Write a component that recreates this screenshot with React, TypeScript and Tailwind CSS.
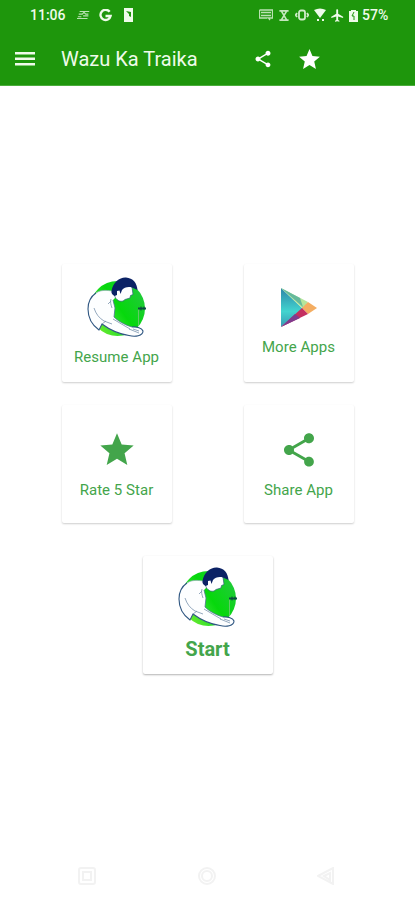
import type { ReactNode } from "react";

const STAR = "M12 17.27 18.18 21l-1.64-7.03L22 9.24l-7.19-.61L12 2 9.19 8.63 2 9.24l5.46 4.73L5.82 21z";
const SHARE =
  "M18 16.08c-.76 0-1.44.3-1.96.77L8.91 12.7c.05-.23.09-.46.09-.7s-.04-.47-.09-.7l7.05-4.11c.54.5 1.25.81 2.04.81 1.66 0 3-1.34 3-3s-1.34-3-3-3-3 1.34-3 3c0 .24.04.47.09.7L8.04 9.81C7.5 9.31 6.79 9 6 9c-1.66 0-3 1.34-3 3s1.34 3 3 3c.79 0 1.5-.31 2.04-.81l7.12 4.16c-.05.21-.08.43-.08.65 0 1.61 1.31 2.92 2.92 2.92s2.92-1.31 2.92-2.92-1.31-2.92-2.92-2.92z";
const PLANE = "M21 16v-2l-8-5V3.500C13 2.670 12.330 2 11.500 2S10 2.670 10 3.500V9l-8 5v2l8-2.500V19l-2 1.500V22l3.500-1 3.500 1v-1.500L13 19v-5.500z";

function Glyph({ d, className }: { d: string; className: string }) {
  return (
    <svg viewBox="0 0 24 24" className={className} fill="currentColor">
      <path d={d} />
    </svg>
  );
}

function Logo() {
  return (
    <svg viewBox="0 0 60 60" className="h-[60px] w-[60px] shrink-0">
      <defs>
        <linearGradient id="disc" x1="0" y1="1" x2="1" y2="0.3">
          <stop offset="0" stopColor="#8cf02c" />
          <stop offset="0.4" stopColor="#2fe02c" />
          <stop offset="0.6" stopColor="#06d80c" />
          <stop offset="1" stopColor="#1fcb38" />
        </linearGradient>
      </defs>
      <circle cx="30.500" cy="31.500" r="27.500" fill="url(#disc)" />
      {/* torso and forearms */}
      <path
        d="M25 14C19 13 13 13 9 16C3 20 1 26 1 32C1 41 5 48 12 53L15 47C23 53 32 57 42 58.500C48 60 56 59 56 54C55 51 50 49.500 45 50C38 48 31 44 27 40L28 31L26 23L29 20Z"
        fill="#fdfeff"
      />
      <path d="M25 14C19 13 13 13 9 16" fill="none" stroke="#9ab4bd" strokeWidth="0.800" />
      <path
        d="M9 16C3 20 1 26 1 32C1 41 5 48 12 53L15 47C23 53 32 57 42 58.500C48 60 56 59 56 54C55 51 50 49.500 45 50"
        fill="none"
        stroke="#2f5681"
        strokeWidth="1.100"
      />
      <path d="M45 50C38 48 31 44 27 40L28 31L26 23" fill="none" stroke="#4b7790" strokeWidth="0.800" />
      {/* face */}
      <path
        d="M27 14L28 20C30 24 35 26 38 22.500L43 21L43.500 18.500L46 17.500L45 10L36 6Z"
        fill="#fdfeff"
        stroke="#2f5e78"
        strokeWidth="0.700"
        strokeLinejoin="round"
      />
      {/* hair */}
      <path d="M24.500 14C26 5 33 0 39 .5C46 1 50 6 50.500 13L45 10.500C41 9.500 37 10.500 35 13L33.500 17L32.500 13.500L30 14L30 18L27.500 19C25.500 18 24 16 24.500 14Z" fill="#0b2265" />
      <path d="M24 22c-1 3 0 6 1 9M7 31c2 6 5 10 10 13l8 3M15 47l4-3M24 24l-3 3M26 42l17 10M42 52l10 4M46 52l6 2" fill="none" stroke="#7892ac" strokeWidth="0.800" />
      <path d="M51.500 32v17" stroke="#62c965" strokeWidth="1" />
      <path d="M51 30.500h8v2h-8z" fill="#0a5140" />
      <path d="M54 29.500v4M57 29.500v3" stroke="#0a4840" />
    </svg>
  );
}

function PlayLogo() {
  return (
    <svg viewBox="0 0 38 40" className="h-10 w-[38px]">
      <defs>
        <linearGradient id="play" x1="0" y1="0" x2="0" y2="1">
          <stop offset="0" stopColor="#2e86a8" />
          <stop offset="0.6" stopColor="#42d4cf" />
          <stop offset="1" stopColor="#3999b3" />
        </linearGradient>
      </defs>
      <path d="M1 0L23 21L1 39Z" fill="url(#play)" />
      <path d="M1 0L28 14L23 21Z" fill="#b5e59c" />
      <path d="M1 0L20 10L23 19Z" fill="#65b99c" />
      <path d="M28 14L37 20L28 26L22 20Z" fill="#f4ad62" />
      <path d="M22 20L28 26L1 39Z" fill="#c42f60" />
      <path d="M15 26L20 30L1 39Z" fill="#803b8e" />
    </svg>
  );
}

function Card({ label, icon, className }: { label: string; icon: ReactNode; className: string }) {
  return (
    <div className={`flex h-[118px] w-[110px] flex-col items-center rounded-[2px] bg-white shadow-[0_1px_2px_rgba(0,0,0,0.2)] ${className}`}>
      {icon}
      <span className="text-[15px] leading-[18px] tracking-[0.05px] whitespace-nowrap">{label}</span>
    </div>
  );
}

export default function App() {
  return (
    <div className="flex h-[900px] w-[415px] flex-col overflow-hidden bg-white font-[Roboto,sans-serif] text-[#43a54b]">
      <header className="h-[86px] shrink-0 border-b border-[#4bad3c] bg-[#1e960c] text-[#effbea]">
        <div className="flex h-[30px] items-center pl-[30px] text-[14px] font-medium">
          <span className="w-[47px]">11:06</span>
          <svg viewBox="0 0 16 12" className="h-3 w-[14px] opacity-75" fill="none" stroke="currentColor">
            <path d="M3 2h11M2 5h4l2-2 2 2h3M1 8h4M7 7h6M0 10h12" strokeWidth="1.300" />
          </svg>
          <svg viewBox="0 0 14 14" className="ml-[8px] h-[13px] w-[13px]" fill="none" stroke="currentColor" strokeWidth="2.500">
            <path d="M11.500 3A5.500 5.500 0 1 0 12.500 7.500H7" />
          </svg>
          <svg viewBox="0 0 9 14" className="ml-[12px] h-[14px] w-[9px]">
            <path d="M0 0h9v14H0z" fill="currentColor" />
            <path d="M2 3l5 1v5L5 8V6z" fill="#1e960c" />
          </svg>
          <svg viewBox="0 0 14 12" className="ml-[126px] h-3 w-[14px] opacity-75" fill="none" stroke="currentColor">
            <path d="M.5 1h13v8h-4L11 11M.5 1v8h8M2 3.500h10M2 6.500h10" strokeWidth="1.300" />
          </svg>
          <svg viewBox="0 0 12 12" className="ml-[5px] h-[11px] w-3 opacity-80" fill="none" stroke="currentColor" strokeWidth="1.800">
            <path d="M1 1h10M1 11h10M3 1l6 10M9 1L3 11" />
          </svg>
          <svg viewBox="0 0 14 12" className="ml-[5px] h-3 w-[14px] opacity-85" fill="none" stroke="currentColor" strokeWidth="1.800">
            <rect x="4" y="1.500" width="6" height="9" rx="2" />
            <path d="M2 4L.8 6 2 8M12 4l1.200 2L12 8" />
          </svg>
          <svg viewBox="0 0 12 14" className="ml-[5px] h-[14px] w-3" fill="currentColor">
            <path d="M0 2Q6-1 12 2L6 10zM3 11h2v2H3zM8 11h2v2H8z" />
          </svg>
          <Glyph d={PLANE} className="ml-[4px] h-[15px] w-[15px]" />
          <svg viewBox="0 0 9 13" className="ml-[4px] h-[13px] w-[9px]" fill="currentColor">
            <path d="M2 1h5v1h2v11H0V2h2z" />
            <path d="M5 3L3 7h2v4" fill="none" stroke="#1e960c" />
          </svg>
          <span className="ml-[4px]">57%</span>
        </div>
        <div className="flex h-[56px] items-center pt-[2px] pl-[15px]">
          <svg viewBox="0 0 20 14" className="h-[14px] w-5" fill="currentColor">
            <path d="M0 0h20v2.500H0zM0 5.500h20V8H0zM0 11h20v2.500H0z" />
          </svg>
          <h1 className="ml-[26px] w-[192px] text-[20px] leading-6 font-normal whitespace-nowrap">Wazu Ka Traika</h1>
          <Glyph d={SHARE} className="h-5 w-5 text-white" />
          <Glyph d={STAR} className="ml-[24px] h-[25px] w-[25px] text-white" />
        </div>
      </header>

      <main className="flex flex-1 flex-col items-center pt-[178px]">
        <div className="grid grid-cols-[110px_110px] gap-x-[72px] gap-y-[23px]">
          <Card label="Resume App" className="gap-[11px] pt-[13px]" icon={<Logo />} />
          <Card label="More Apps" className="gap-[10px] pt-[24px]" icon={<PlayLogo />} />
          <Card label="Rate 5 Star" className="gap-[11px] pt-[25px]" icon={<Glyph d={STAR} className="h-[40px] w-[40px]" />} />
          <Card label="Share App" className="gap-[11px] pt-[25px]" icon={<Glyph d={SHARE} className="h-[40px] w-[40px]" />} />
        </div>
        <div className="mt-[33px] flex h-[118px] w-[130px] flex-col items-center rounded-[2px] bg-white pt-[11px] shadow-[0_1px_2px_rgba(0,0,0,0.3)]">
          <Logo />
          <span className="mt-[10px] text-[20px] leading-6 font-bold">Start</span>
        </div>
      </main>

      <nav className="flex h-[33px] shrink-0 items-start justify-between pr-[80px] pl-[78px] text-[#f2f2f2]">
        <svg viewBox="0 0 18 18" className="h-[18px] w-[18px]" fill="none" stroke="currentColor" strokeWidth="2">
          <rect x="1" y="1" width="16" height="16" rx="2" />
          <rect x="5" y="5" width="8" height="8" />
        </svg>
        <svg viewBox="0 0 18 18" className="h-[18px] w-[18px]" fill="none" stroke="currentColor" strokeWidth="2">
          <circle cx="9" cy="9" r="8" />
          <circle cx="9" cy="9" r="5" />
        </svg>
        <svg viewBox="0 0 18 18" className="h-[18px] w-[18px]" fill="none" stroke="currentColor" strokeWidth="2">
          <path d="M1 9L16 1v16zM7 9l6-3v7z" />
        </svg>
      </nav>
    </div>
  );
}
